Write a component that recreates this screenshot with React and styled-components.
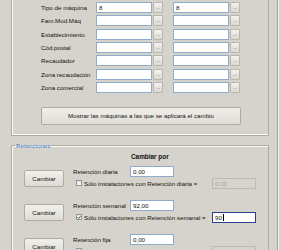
import React from 'react';
import styled, { createGlobalStyle } from 'styled-components';

const GlobalStyle = createGlobalStyle`
  body {
    margin: 0;
    background: #d6d3cc;
    font-family: "Liberation Sans", Arial, sans-serif;
    font-size: 6.2px;
    color: #111;
  }
`;

const filters = [
  { label: 'Tipo de máquina', from: '8', to: '8' },
  { label: 'Fam.Mod.Máq', from: '', to: '' },
  { label: 'Establecimiento', from: '', to: '' },
  { label: 'Cód.postal', from: '', to: '' },
  { label: 'Recaudador', from: '', to: '' },
  { label: 'Zona recaudación', from: '', to: '' },
  { label: 'Zona comercial', from: '', to: '' },
];

const retentions = [
  { label: 'Retención diaria', value: '0,00', only: 'Sólo instalaciones con Retención diaria =', checked: false, limit: '0.00' },
  { label: 'Retención semanal', value: '92,00', only: 'Sólo instalaciones con Retención semanal =', checked: true, limit: '90', focused: true },
  { label: 'Retención fija', value: '0,00', only: 'Sólo instalaciones con Retención fija =', checked: false, limit: '0.00' },
];

const Window = styled.div`
  width: 281px;
  height: 250px;
  overflow: hidden;
  display: flex;
`;

const Panel = styled.div`
  width: 278px;
  height: 100%;
  box-sizing: border-box;
  padding-left: 11px;
  border-right: 1px solid #a3a097;
  box-shadow: 1px 0 #f4f2ec;
`;

const FilterGroup = styled.div`
  width: 258px;
  box-sizing: border-box;
  border: 1px solid #aeab9f;
  border-top: none;
  box-shadow: inset 1px 0 #fbfaf6, inset 0 -1px #fbfaf6;
  padding: 2px 0 10px 29px;
`;

const Rows = styled.div`
  display: flex;
  flex-direction: column;
  gap: 2.33px;
`;

const Row = styled.div`
  display: flex;
  align-items: center;
  height: 11px;
`;

const Label = styled.span`
  width: ${(p) => p.$w}px;
  flex: none;
  white-space: nowrap;
`;

const Lookup = styled.div`
  display: flex;
  gap: 1px;
  margin-left: ${(p) => p.$gap || 0}px;
`;

const Field = styled.div`
  width: ${(p) => p.$w}px;
  height: 11px;
  box-sizing: border-box;
  flex: none;
  display: flex;
  align-items: center;
  padding-left: 2px;
  background: ${(p) => (p.$disabled ? '#d6d3cc' : '#fff')};
  color: ${(p) => (p.$disabled ? '#a9a79f' : '#111')};
  border: 1px solid ${(p) => (p.$focused ? '#2b3f8f' : p.$disabled ? '#bdbab1' : '#8eaccb')};
`;

const Caret = styled.span`
  width: 1px;
  height: 7px;
  background: #000;
  margin-left: 1px;
`;

const DotsButton = styled.div`
  width: 10px;
  height: 11px;
  box-sizing: border-box;
  border: 1px solid #b9b6ad;
  border-radius: 1px;
  background: linear-gradient(#f3f2ee, #dcd9d1);
  color: #666;
  font-size: 5px;
  line-height: 9px;
  text-align: center;
`;

const WideButton = styled.div`
  width: 200px;
  height: 18px;
  margin-top: 14px;
  box-sizing: border-box;
  border: 1px solid #aeaba2;
  border-radius: 2px;
  background: linear-gradient(#f1efea, #e0ddd6);
  display: flex;
  align-items: center;
  justify-content: center;
  white-space: nowrap;
`;

const RetGroup = styled.fieldset`
  width: 258px;
  box-sizing: border-box;
  margin: 6px 0 0;
  padding: 0;
  border: 1px solid #aeab9f;
  box-shadow: inset 1px 1px #fbfaf6;
  min-width: 0;
`;

const Legend = styled.legend`
  margin-left: 3px;
  padding: 0 1px;
  color: #3f7fcf;
  line-height: 7px;
`;

const Heading = styled.div`
  font-weight: bold;
  font-size: 6.4px;
  padding-left: 119px;
  margin-top: 4px;
  line-height: 7px;
`;

const RetList = styled.div`
  display: flex;
  flex-direction: column;
  gap: 11px;
  margin-top: 6px;
`;

const RetRow = styled.div`
  display: flex;
  align-items: center;
`;

const ActionButton = styled.div`
  width: 40px;
  height: 17px;
  margin: 2px 0 0 12px;
  box-sizing: border-box;
  border: 1px solid #aeaba2;
  border-radius: 2px;
  background: linear-gradient(#f2f0eb, #dedbd3);
  display: flex;
  align-items: center;
  justify-content: center;
`;

const RetBody = styled.div`
  width: 183px;
  margin-left: 9px;
  display: flex;
  flex-direction: column;
  gap: 1px;
`;

const Line = styled.div`
  display: flex;
  align-items: center;
  height: 11px;
`;

const Check = styled.span`
  width: 6px;
  height: 6px;
  box-sizing: border-box;
  margin: 0 2px 0 3px;
  border: 1px solid #8a97a8;
  background: linear-gradient(#e4e3dc, #fbfbf8);
  display: flex;
  align-items: center;
  justify-content: center;
  flex: none;
`;

const OnlyText = styled.span`
  flex: 1;
  white-space: nowrap;
`;

const Tick = () => (
  <svg width="5" height="5" viewBox="0 0 5 5">
    <path d="M0.6 2.4 L2 3.8 L4.4 1" stroke="#1f3e1f" strokeWidth="1.1" fill="none" />
  </svg>
);

export default function App() {
  return (
    <Window>
      <GlobalStyle />
      <Panel>
        <FilterGroup>
          <Rows>
            {filters.map((f) => (
              <Row key={f.label}>
                <Label $w={55}>{f.label}</Label>
                <Lookup>
                  <Field $w={56}>{f.from}</Field>
                  <DotsButton>...</DotsButton>
                </Lookup>
                <Lookup $gap={10}>
                  <Field $w={56}>{f.to}</Field>
                  <DotsButton>...</DotsButton>
                </Lookup>
              </Row>
            ))}
          </Rows>
          <WideButton>Mostrar las máquinas a las que se aplicará el cambio</WideButton>
        </FilterGroup>

        <RetGroup>
          <Legend>Retenciones</Legend>
          <Heading>Cambiar por</Heading>
          <RetList>
            {retentions.map((r) => (
              <RetRow key={r.label}>
                <ActionButton>Cambiar</ActionButton>
                <RetBody>
                  <Line>
                    <Label $w={57}>{r.label}</Label>
                    <Field $w={44}>{r.value}</Field>
                  </Line>
                  <Line>
                    <Check>{r.checked && <Tick />}</Check>
                    <OnlyText>{r.only}</OnlyText>
                    <Field $w={44} $disabled={!r.checked} $focused={r.focused}>
                      {r.limit}
                      {r.focused && <Caret />}
                    </Field>
                  </Line>
                </RetBody>
              </RetRow>
            ))}
          </RetList>
        </RetGroup>
      </Panel>
    </Window>
  );
}
